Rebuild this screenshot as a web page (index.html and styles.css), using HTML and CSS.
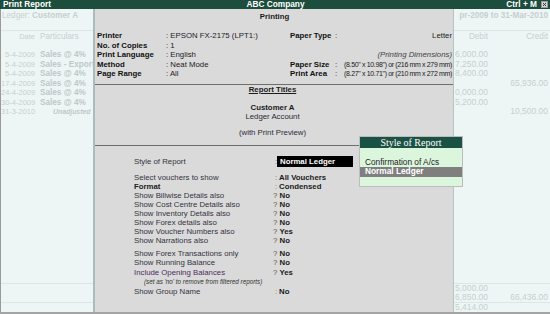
FILE: index.html
```html
<!DOCTYPE html>
<html lang="en">
<head>
  <meta charset="UTF-8" />
  <title>Print Report</title>
  <link rel="stylesheet" href="styles.css">
</head>
<body>

  <div class="app">
    <div class="titlebar">
      <span class="tb-left">Print Report</span>
      <span class="tb-center">ABC Company</span>
      <span class="tb-right">Ctrl + M
        <svg class="close-box" width="7" height="7" viewBox="0 0 7 7">
          <rect x="0.5" y="0.5" width="6" height="6" fill="#d6d6d6" stroke="#9a9a9a" stroke-width="1"/>
          <path d="M2 2 L5 5 M5 2 L2 5" stroke="#333" stroke-width="1"/>
        </svg>
      </span>
    </div>

    <div class="main">
      <!-- ledger behind the dialog, left part -->
      <aside class="ledger ledger-left">
        <div class="lg-title">Ledger: <b>Customer A</b></div>
        <div class="lg-head"><span class="c-date">Date</span><span class="c-head">Particulars</span></div>
        <div class="lg-rows">
          <div class="lg-row"><span class="c-date">5-4-2009</span><span class="c-part">Sales @ 4%</span></div>
          <div class="lg-row"><span class="c-date">5-4-2009</span><span class="c-part">Sales - Export</span></div>
          <div class="lg-row"><span class="c-date">5-4-2009</span><span class="c-part">Sales @ 4%</span></div>
          <div class="lg-row"><span class="c-date">17-4-2009</span><span class="c-part">Sales @ 4%</span></div>
          <div class="lg-row"><span class="c-date">24-4-2009</span><span class="c-part">Sales @ 4%</span></div>
          <div class="lg-row"><span class="c-date">30-4-2009</span><span class="c-part">Sales @ 4%</span></div>
          <div class="lg-row"><span class="c-date">31-3-2010</span><span class="c-part unadj">Unadjusted</span></div>
        </div>
        <div class="lg-foot">
          <div class="f-row"></div>
          <div class="f-row split-line"></div>
          <div class="f-row"></div>
        </div>
      </aside>

      <section class="dialog">
        <div class="dlg-head">
          <div class="dlg-title">Printing</div>
          <div class="setup">
            <div class="setup-left">
              <span class="lbl">Printer</span><span>: EPSON FX-2175 (LPT1:)</span>
              <span class="lbl">No. of Copies</span><span>: 1</span>
              <span class="lbl">Print Language</span><span>: English</span>
              <span class="lbl">Method</span><span>: Neat Mode</span>
              <span class="lbl">Page Range</span><span>: All</span>
            </div>
            <div class="setup-right">
              <span class="lbl r1">Paper Type</span><span class="split r1"><span>:</span><span>Letter</span></span>
              <span class="dims">(Printing Dimensions)</span>
              <span class="lbl r4">Paper Size</span><span class="split r4"><span>:</span><span class="tiny">(8.50" x 10.98") or (216 mm x 279 mm)</span></span>
              <span class="lbl r5">Print Area</span><span class="split r5"><span>:</span><span class="tiny">(8.27" x 10.71") or (210 mm x 272 mm)</span></span>
            </div>
          </div>
        </div>

        <div class="dlg-titles">
          <div class="tt-head">Report Titles</div>
          <div class="tt-name">Customer A</div>
          <div class="tt-sub">Ledger Account</div>
          <div class="tt-note">(with Print Preview)</div>
        </div>

        <div class="dlg-options">
          <div class="opts g0">
            <span class="opt-label">Style of Report</span>
            <span class="val"><span class="sep">:</span><span class="pick">Normal Ledger</span></span>
          </div>
          <div class="opts g1">
            <span class="opt-label">Select vouchers to show</span><span class="val"><span class="sep">:</span>All Vouchers</span>
            <span class="opt-label fmt">Format</span><span class="val"><span class="sep">:</span>Condensed</span>
            <span class="opt-label">Show Billwise Details also</span><span class="val"><span class="sep q">?</span>No</span>
            <span class="opt-label">Show Cost Centre Details also</span><span class="val"><span class="sep q">?</span>No</span>
            <span class="opt-label">Show Inventory Details also</span><span class="val"><span class="sep q">?</span>No</span>
            <span class="opt-label">Show Forex details also</span><span class="val"><span class="sep q">?</span>No</span>
            <span class="opt-label">Show Voucher Numbers also</span><span class="val"><span class="sep q">?</span>Yes</span>
            <span class="opt-label">Show Narrations also</span><span class="val"><span class="sep q">?</span>No</span>
          </div>
          <div class="opts g2">
            <span class="opt-label">Show Forex Transactions only</span><span class="val"><span class="sep q">?</span>No</span>
            <span class="opt-label">Show Running Balance</span><span class="val"><span class="sep q">?</span>No</span>
            <span class="opt-label purple">Include Opening Balances</span><span class="val"><span class="sep q">?</span>Yes</span>
            <span class="note">(set as 'no' to remove from filtered reports)</span>
            <span class="opt-label">Show Group Name</span><span class="val"><span class="sep">:</span>No</span>
          </div>
        </div>
      </section>

      <!-- ledger behind the dialog, right part -->
      <aside class="ledger ledger-right">
        <div class="lg-title period">pr-2009 to 31-Mar-2010</div>
        <div class="lg-head"><span class="amt">Debit</span><span class="cr">Credit</span></div>
        <div class="lg-rows">
          <div class="lg-row"><span class="amt">6,000.00</span><span class="cr"></span></div>
          <div class="lg-row"><span class="amt">7,250.00</span><span class="cr"></span></div>
          <div class="lg-row"><span class="amt">8,400.00</span><span class="cr"></span></div>
          <div class="lg-row"><span class="amt"></span><span class="cr">65,936.00</span></div>
          <div class="lg-row"><span class="amt">0,000.00</span><span class="cr"></span></div>
          <div class="lg-row"><span class="amt">5,200.00</span><span class="cr"></span></div>
          <div class="lg-row"><span class="amt"></span><span class="cr">10,500.00</span></div>
        </div>
        <div class="lg-foot">
          <div class="f-row"><span class="amt">5,000.00</span><span class="cr"></span></div>
          <div class="f-row split-line"><span class="amt">6,850.00</span><span class="cr">66,436.00</span></div>
          <div class="f-row"><span class="amt">5,414.00</span><span class="cr"></span></div>
        </div>
      </aside>
    </div>

    <div class="popup">
      <div class="pop-head">Style of Report</div>
      <div class="pop-list">
        <div class="pop-item">Confirmation of A/cs</div>
        <div class="pop-item sel">Normal Ledger</div>
      </div>
    </div>
  </div>

</body>
</html>
```

FILE: styles.css
```css
* {
  box-sizing: border-box;
}

body {
  margin: 0;
  font-family: "Liberation Sans", Arial, sans-serif;
  font-size: 7.8px;
  color: #1a1a1a;
  background: #fff;
}

.app {
  position: relative;
  width: 550px;
  height: 314px;
  display: flex;
  flex-direction: column;
  border-bottom: 2px solid #a4a4a4;
  overflow: hidden;
}

/* title bar */
.titlebar {
  height: 9px;
  flex: none;
  background: #1d4d3d;
  color: white;
  font-weight: bold;
  font-size: 8.3px;
  line-height: 9px;
  display: grid;
  grid-template-columns: 1fr auto 1fr;
  padding: 0 2px 0 3px;
  white-space: nowrap;
}

.tb-right {
  justify-self: end;
  display: flex;
  align-items: center;
  gap: 4px;
}

.close-box {
  display: block;
}

.main {
  flex: 1;
  min-height: 0;
  display: flex;
  border-left: 1px solid #9a9a9a;
}

/* ledger in the background */
.ledger {
  background: #eef6f5;
  color: #c5d0cf;
  display: flex;
  flex-direction: column;
  overflow: hidden;
  font-size: 8.2px;
  white-space: nowrap;
}

.ledger-left {
  width: 94px;
  flex: none;
  border-right: 2px solid #a9bdbc;
}

.ledger-right {
  width: 97px;
  flex: none;
  border-left: 1px solid #b3c4c3;
}

.lg-title {
  height: 22px;
  padding: 2px 0 0 1px;
  line-height: 10px;
  border-bottom: 1px solid #dde6e5;
}

.lg-title.period {
  font-weight: bold;
  text-align: right;
  padding-right: 2px;
}

.lg-head {
  display: flex;
  line-height: 11px;
}

.lg-rows {
  padding-top: 8px;
}

.lg-row {
  display: flex;
  line-height: 9.5px;
}

.c-date {
  width: 34px;
  flex: none;
  text-align: right;
  font-size: 7.5px;
}

.c-head {
  margin-left: 5px;
}

.c-part {
  margin-left: 5px;
  font-weight: bold;
  color: #bdc9c8;
}

.c-part.unadj {
  margin-left: 18px;
  font-size: 6.9px;
  font-style: italic;
}

.amt {
  width: 34px;
  flex: none;
  text-align: right;
  font-size: 8.5px;
}

.cr {
  flex: 1;
  text-align: right;
  padding-right: 2px;
  font-size: 8.5px;
}

.lg-head .amt,
.lg-head .cr {
  font-size: 8.2px;
}

.lg-foot {
  margin-top: auto;
  border-top: 1px solid #dde6e5;
}

.f-row {
  display: flex;
  height: 9px;
  line-height: 9px;
}

.f-row.split-line {
  height: 10px;
  border-bottom: 1px solid #dde6e5;
}

/* print dialog */
.dialog {
  flex: 1;
  background: #dadada;
  display: flex;
  flex-direction: column;
  white-space: nowrap;
}

.dlg-head {
  height: 76px;
  padding: 3px 1px 0 2px;
  border-bottom: 1px solid #6e6e6e;
}

.dlg-title {
  text-align: center;
  font-weight: bold;
  line-height: 10px;
  margin-bottom: 9px;
}

.setup {
  display: flex;
}

.setup-left {
  width: 193px;
  display: grid;
  grid-template-columns: 69px 1fr;
  grid-auto-rows: 9.6px;
  line-height: 9.6px;
}

.setup-right {
  flex: 1;
  display: grid;
  grid-template-columns: 45px 1fr;
  grid-template-rows: repeat(5, 9.6px);
  line-height: 9.6px;
}

.lbl {
  font-weight: bold;
  color: #111;
}

.r1 { grid-row: 1; }
.r4 { grid-row: 4; }
.r5 { grid-row: 5; }

.split {
  display: flex;
  justify-content: space-between;
}

.dims {
  grid-column: 1 / 3;
  grid-row: 3;
  text-align: right;
  font-style: italic;
  color: #444;
}

.tiny {
  font-size: 7px;
  letter-spacing: -0.35px;
}

.dlg-titles {
  height: 61px;
  padding-right: 3px;
  text-align: center;
  border-bottom: 1px solid #6e6e6e;
  line-height: 9px;
}

.tt-head {
  font-weight: bold;
  text-decoration: underline;
}

.tt-name {
  font-weight: bold;
  margin-top: 8.5px;
}

.tt-sub {
  color: #2e2a3a;
}

.tt-note {
  margin-top: 7px;
  color: #2e2a3a;
}

.dlg-options {
  padding: 10px 0 0 39px;
}

.opts {
  display: grid;
  grid-template-columns: 139px 1fr;
}

.g0 {
  line-height: 11px;
}

.g1 {
  margin-top: 5.5px;
  line-height: 9px;
}

.g2 {
  margin-top: 4px;
  line-height: 9.5px;
}

.opt-label {
  color: #33333f;
}

.opt-label.fmt {
  font-weight: bold;
  color: #222;
}

.opt-label.purple {
  color: #4c2c5c;
}

.val {
  font-weight: bold;
}

.sep {
  display: inline-block;
  width: 6px;
  text-align: center;
  font-weight: normal;
  color: #8a6a40;
}

.sep.q {
  width: 6.5px;
  text-align: left;
  color: #5a5040;
}

.pick {
  display: inline-block;
  width: 76px;
  margin-left: -2px;
  padding-left: 3px;
  background: #000;
  color: white;
}

.note {
  grid-column: 1 / 3;
  padding-left: 10px;
  font-size: 6.3px;
  font-style: italic;
  color: #333;
}

/* Style of Report pick list */
.popup {
  position: absolute;
  left: 359px;
  top: 136px;
  width: 104px;
  height: 51px;
  border: 1px solid #bcbcbc;
  background: #dbf6dc;
  font-size: 8.3px;
  white-space: nowrap;
}

.pop-head {
  height: 11px;
  background: #1a5243;
  color: white;
  font-family: "Liberation Serif", "Times New Roman", serif;
  font-size: 10px;
  line-height: 11px;
  text-align: center;
}

.pop-list {
  padding-top: 9.5px;
}

.pop-item {
  padding-left: 5px;
  line-height: 9.5px;
  color: #222;
}

.pop-item.sel {
  background: #7f7f7f;
  color: white;
  font-weight: bold;
}
```
